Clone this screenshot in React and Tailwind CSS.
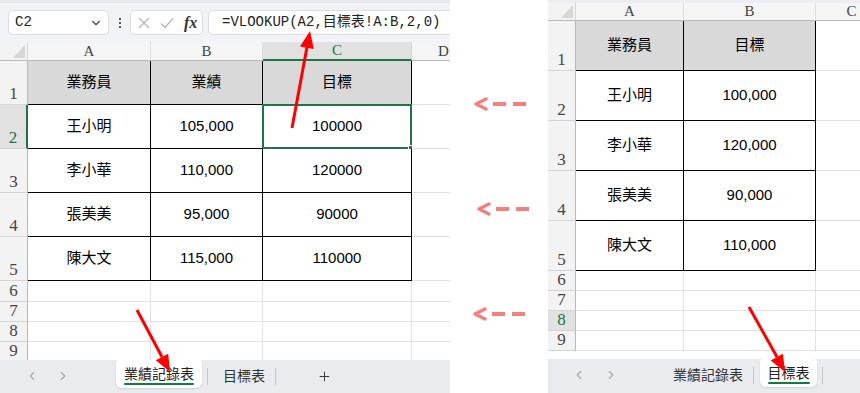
import { ChevronDown, ChevronLeft, ChevronRight, Plus } from 'lucide-react';

const CELL_FONT = "font-['Liberation_Sans','Noto_Sans_CJK_TC',sans-serif]";
const HEAD_FONT = "font-['Liberation_Serif',serif]";
const GREEN = 'text-[#217346]';

// Hoja izquierda: 業績記錄表
const leftCols = [
  { k: 'A', w: 'w-[123px]' },
  { k: 'B', w: 'w-[112px]' },
  { k: 'C', w: 'w-[149px]' },
  { k: 'D', w: 'w-[64px]' },
];

const leftRows = [
  { n: 1, h: 'h-[44px]', head: true, cells: ['業務員', '業績', '目標'] },
  { n: 2, h: 'h-[44px]', cells: ['王小明', '105,000', '100000'] },
  { n: 3, h: 'h-[44px]', cells: ['李小華', '110,000', '120000'] },
  { n: 4, h: 'h-[44px]', cells: ['張美美', '95,000', '90000'] },
  { n: 5, h: 'h-[44px]', cells: ['陳大文', '115,000', '110000'] },
  { n: 6, h: 'h-[21px]', cells: [] },
  { n: 7, h: 'h-[20px]', cells: [] },
  { n: 8, h: 'h-[20px]', cells: [] },
  { n: 9, h: 'h-[20px]', cells: [] },
];

// Hoja derecha: 目標表
const rightCols = [
  { k: 'A', w: 'w-[108px]' },
  { k: 'B', w: 'w-[132px]' },
  { k: 'C', w: 'w-[72px]' },
];

const rightRows = [
  { n: 1, h: 'h-[50px]', head: true, cells: ['業務員', '目標'] },
  { n: 2, h: 'h-[50px]', cells: ['王小明', '100,000'] },
  { n: 3, h: 'h-[50px]', cells: ['李小華', '120,000'] },
  { n: 4, h: 'h-[50px]', cells: ['張美美', '90,000'] },
  { n: 5, h: 'h-[50px]', cells: ['陳大文', '110,000'] },
  { n: 6, h: 'h-[20px]', cells: [] },
  { n: 7, h: 'h-[20px]', cells: [] },
  { n: 8, h: 'h-[20px]', cells: [] },
  { n: 9, h: 'h-[20px]', cells: [] },
];

const Corner = ({ h }) => (
  <div className={`${h} w-[28px] flex-none relative bg-[#f3f3f3] border-r border-b border-r-[#d6d6d6] border-b-[#b8b8b8]`}>
    <svg className="absolute right-[2px] bottom-[2px]" width="12" height="13" viewBox="0 0 12 13">
      <polygon points="12,0 12,13 0,13" fill="#d6d6d6" />
    </svg>
  </div>
);

const Sheet = ({ cols, rows, headH, activeCol, activeRow, selected }) => (
  <div className="flex-1 min-h-0 overflow-hidden">
    <div className="flex w-max">
      <Corner h={headH} />
      {cols.map((c) => (
        <div
          key={c.k}
          className={`${c.w} ${headH} flex-none flex items-center justify-center border-r border-b text-[15px] leading-none ${HEAD_FONT} ${
            c.k === activeCol
              ? `bg-[#e1e1e1] border-r-[#d6d6d6] border-b-2 border-b-[#217346] ${GREEN}`
              : 'bg-[#f5f5f5] border-r-[#dedede] border-b-[#b8b8b8] text-[#444]'
          }`}
        >
          {c.k}
        </div>
      ))}
    </div>

    {rows.map((r) => (
      <div key={r.n} className="flex w-max">
        <div
          className={`${r.h} w-[28px] flex-none flex items-end justify-center border-b border-b-[#d4d4d4] text-[17px] leading-none pb-[2px] ${HEAD_FONT} ${
            r.n === activeRow
              ? `bg-[#e1e1e1] ${GREEN} ${selected ? 'border-r-2 border-r-[#217346]' : 'border-r border-r-[#b8b8b8]'}`
              : 'bg-[#f3f3f3] border-r border-r-[#b8b8b8] text-[#444]'
          }`}
        >
          {r.n}
        </div>
        {cols.map((c, ci) => {
          const inTable = ci < r.cells.length;
          const isSel = selected && selected.row === r.n && selected.col === c.k;
          return (
            <div
              key={c.k}
              className={`${c.w} ${r.h} flex-none relative flex items-center justify-center border-r border-b text-[15px] text-black ${CELL_FONT} ${
                inTable ? 'border-black' : 'border-[#e1e1e1]'
              } ${r.head && inTable ? 'bg-[#d9d9d9]' : 'bg-white'}`}
            >
              {inTable && r.cells[ci]}
              {isSel && (
                <>
                  <div className="absolute -top-[1px] -left-[1px] -right-[1px] -bottom-[1px] border-2 border-[#217346]" />
                  <div className="absolute -right-[4px] -bottom-[4px] w-[7px] h-[7px] bg-[#217346] border border-white" />
                </>
              )}
            </div>
          );
        })}
      </div>
    ))}
  </div>
);

const Sep = ({ className = '' }) => (
  <div className={`w-px h-[17px] mt-[8px] bg-[#c6c6c6] flex-none ${className}`} />
);

const ActiveTab = ({ label, className = '', lineW }) => (
  <div
    className={`h-[28px] flex-none bg-white rounded-t-[3px] rounded-b-[6px] shadow-[0_1px_2px_rgba(0,0,0,0.12)] flex flex-col items-center pt-[6px] ${className}`}
  >
    <span className="text-[14px] leading-[16px] text-[#222]">{label}</span>
    <div className={`${lineW} h-[2px] mt-[1px] bg-[#107c41] rounded-full`} />
  </div>
);

const Arrow = ({ className }) => (
  <svg className={`block ${className}`} width="56" height="16" viewBox="0 0 56 16">
    <polyline points="13,3 3,8 13,13" fill="none" stroke="#f47f7f" strokeWidth="3.5" strokeLinecap="round" strokeLinejoin="round" />
    <line x1="20" y1="8" x2="33" y2="8" stroke="#f47f7f" strokeWidth="4" />
    <line x1="40" y1="8" x2="53" y2="8" stroke="#f47f7f" strokeWidth="4" />
  </svg>
);

const App = () => {
  return (
    <div className={`relative w-[860px] h-[393px] flex bg-white overflow-hidden ${CELL_FONT}`}>
      {/* PANEL IZQUIERDO */}
      <div className="w-[450px] h-full flex-none flex flex-col overflow-hidden">
        <div className="h-[42px] flex-none bg-[#f1f3f6] border-t-[3px] border-[#e6e8eb] flex items-center pl-[8px]">
          <div className="w-[101px] h-[25px] flex-none bg-white border border-[#dcdcdc] rounded-[5px] flex items-center justify-between pl-[6px] pr-[5px]">
            <span className="font-['Liberation_Mono',monospace] text-[14px] text-[#222]">C2</span>
            <ChevronDown size={14} strokeWidth={2} className="text-[#444]" />
          </div>
          <div className="w-[21px] flex-none flex flex-col items-center gap-[2px]">
            <div className="w-[2px] h-[2px] bg-[#555]" />
            <div className="w-[2px] h-[2px] bg-[#555]" />
            <div className="w-[2px] h-[2px] bg-[#555]" />
          </div>
          <div className="w-[73px] h-[25px] flex-none bg-white border border-[#dcdcdc] rounded-[5px] flex items-center pl-[7px]">
            <svg width="12" height="12" viewBox="0 0 12 12" className="text-[#b5b5b5]">
              <path d="M1 1L11 11M11 1L1 11" stroke="currentColor" strokeWidth="1.3" />
            </svg>
            <svg width="14" height="12" viewBox="0 0 14 12" className="ml-[10px] text-[#b5b5b5]">
              <path d="M1 6.5L5 10.5L13 1.5" fill="none" stroke="currentColor" strokeWidth="1.3" />
            </svg>
            <span className="ml-[10px] font-['Liberation_Serif',serif] italic font-bold text-[16px] text-[#333]">fx</span>
          </div>
          <div className="ml-[5px] w-[260px] h-[25px] flex-none bg-white border border-[#dcdcdc] rounded-[5px] flex items-center pl-[13px]">
            <span className="font-['Liberation_Mono','Noto_Sans_CJK_TC',monospace] text-[14px] text-[#222] whitespace-nowrap">
              =VLOOKUP(A2,目標表!A:B,2,0)
            </span>
          </div>
        </div>

        <Sheet cols={leftCols} rows={leftRows} headH="h-[19px]" activeCol="C" activeRow={2} selected={{ row: 2, col: 'C' }} />

        <div className="h-[33px] flex-none bg-[#e9ebef] flex items-start">
          <div className="h-[32px] flex items-center pl-[25px] gap-[17px] text-[#a9a9a9]">
            <ChevronLeft size={14} />
            <ChevronRight size={14} />
          </div>
          <ActiveTab label="業績記錄表" className="ml-[46px] w-[86px]" lineW="w-[70px]" />
          <Sep className="ml-[5px]" />
          <div className="ml-[15px] h-[32px] flex items-center text-[14px] text-[#333]">目標表</div>
          <Sep className="ml-[10px]" />
          <div className="ml-[41px] h-[32px] flex items-center text-[#333]">
            <Plus size={15} strokeWidth={1.5} />
          </div>
        </div>
      </div>

      {/* FLECHAS ROSAS */}
      <div className="w-[98px] flex-none flex flex-col">
        <Arrow className="mt-[96px] ml-[23px]" />
        <Arrow className="mt-[89px] ml-[26px]" />
        <Arrow className="mt-[89px] ml-[22px]" />
      </div>

      {/* PANEL DERECHO */}
      <div className="w-[312px] h-full flex-none flex flex-col overflow-hidden">
        <div className="h-[3px] flex-none bg-[#eceef1]" />
        <Sheet cols={rightCols} rows={rightRows} headH="h-[18px]" activeRow={8} />
        <div className="h-[34px] flex-none bg-[#e9ebef] flex items-start">
          <div className="h-[32px] flex items-center pl-[24px] gap-[18px] text-[#a9a9a9]">
            <ChevronLeft size={14} />
            <ChevronRight size={14} />
          </div>
          <div className="ml-[55px] h-[32px] flex items-center text-[14px] text-[#333]">業績記錄表</div>
          <Sep className="ml-[10px]" />
          <ActiveTab label="目標表" className="ml-[6px] w-[57px]" lineW="w-[42px]" />
          <Sep className="ml-[5px]" />
        </div>
      </div>

      {/* FLECHAS ROJAS */}
      <svg className="absolute inset-0 pointer-events-none" width="860" height="393" viewBox="0 0 860 393">
        <line x1="292" y1="128" x2="307" y2="47" stroke="#ff0000" strokeWidth="3" />
        <polygon points="310,31 300,46.4 313.8,49" fill="#ff0000" />
        <line x1="137" y1="310" x2="162" y2="357" stroke="#ff0000" strokeWidth="3" />
        <polygon points="170,372 155.8,360.3 168.2,353.7" fill="#ff0000" />
        <line x1="749" y1="307" x2="777" y2="357" stroke="#ff0000" strokeWidth="3" />
        <polygon points="785,372 770.7,360.5 782.9,353.7" fill="#ff0000" />
      </svg>
    </div>
  );
};

export default App;
